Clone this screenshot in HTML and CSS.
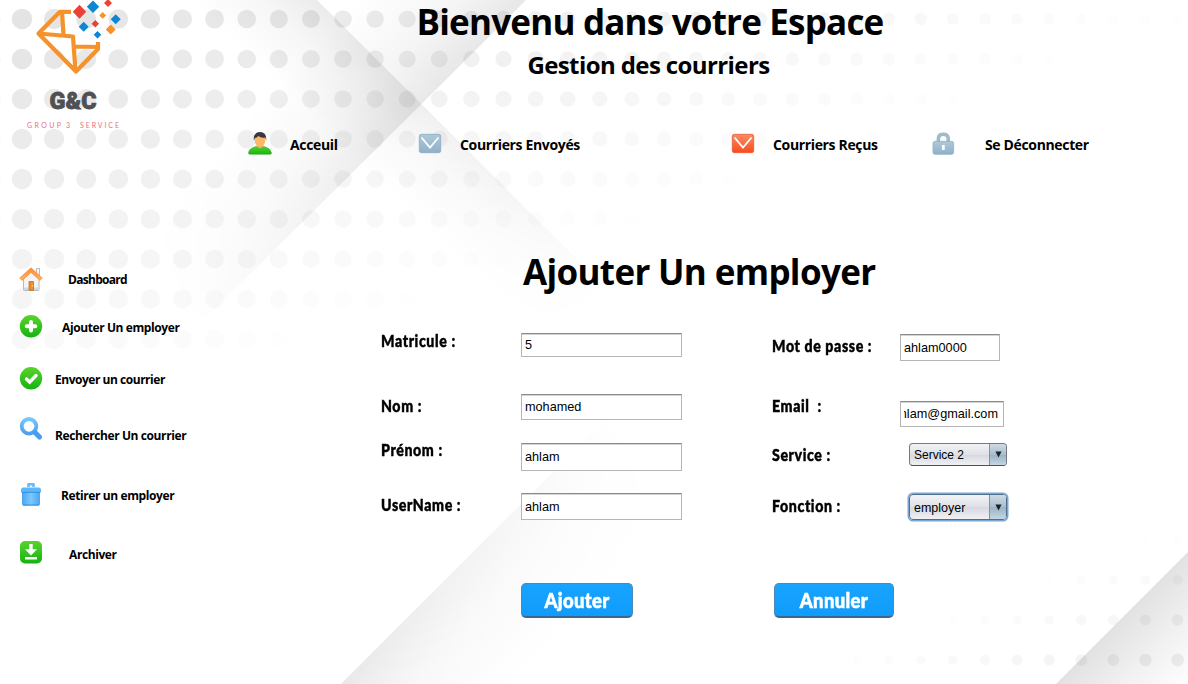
FILE: index.html
```html
<!DOCTYPE html>
<html lang="fr">
<head>
<meta charset="utf-8">
<title>Gestion des courriers</title>
<link rel="stylesheet" href="styles.css">
</head>
<body>
<svg class="backdrop" viewBox="0 0 1188 684" aria-hidden="true">
  <defs>
    <linearGradient id="s1" gradientUnits="userSpaceOnUse" x1="417" y1="100" x2="357" y2="162"><stop offset="0" stop-opacity=".075"/><stop offset=".4" stop-opacity=".035"/><stop offset="1" stop-opacity="0"/></linearGradient>
    <linearGradient id="s2" gradientUnits="userSpaceOnUse" x1="422" y1="102" x2="340" y2="22"><stop offset="0" stop-opacity=".09"/><stop offset=".4" stop-opacity=".04"/><stop offset="1" stop-opacity="0"/></linearGradient>
    <linearGradient id="s3" gradientUnits="userSpaceOnUse" x1="440" y1="585" x2="525" y2="670"><stop offset="0" stop-opacity=".09"/><stop offset=".4" stop-opacity=".035"/><stop offset="1" stop-opacity="0"/></linearGradient>
    <linearGradient id="s4" gradientUnits="userSpaceOnUse" x1="1122" y1="618" x2="1188" y2="684"><stop offset="0" stop-opacity=".115"/><stop offset=".5" stop-opacity=".055"/><stop offset="1" stop-opacity=".005"/></linearGradient>
    <linearGradient id="f1" gradientUnits="userSpaceOnUse" x1="410" y1="95" x2="610" y2="290"><stop offset="0" stop-color="#fff"/><stop offset=".12" stop-color="#bbb"/><stop offset=".5" stop-color="#888"/><stop offset="1" stop-color="#000"/></linearGradient>
    <linearGradient id="f2" gradientUnits="userSpaceOnUse" x1="450" y1="76" x2="200" y2="324"><stop offset="0" stop-color="#fff"/><stop offset=".3" stop-color="#ddd"/><stop offset="1" stop-color="#000"/></linearGradient>
    <linearGradient id="f3" gradientUnits="userSpaceOnUse" x1="342" y1="684" x2="610" y2="416"><stop offset="0" stop-color="#fff"/><stop offset="1" stop-color="#000"/></linearGradient>
    <mask id="m1"><path fill="url(#f1)" d="M0 0H1188V684H0z"/></mask>
    <mask id="m2"><path fill="url(#f2)" d="M0 0H1188V684H0z"/></mask>
    <mask id="m3"><path fill="url(#f3)" d="M0 0H1188V684H0z"/></mask>
  </defs>
  <path fill="url(#s1)" mask="url(#m1)" d="M317 0 625 307 560 400 100 200V0z"/>
  <path fill="url(#s2)" mask="url(#m2)" d="M526 0 200 324 100 250V0z"/>
  <path fill="url(#s3)" mask="url(#m3)" d="M341 684 625 400 900 684z"/>
  <path fill="url(#s4)" d="M1056 684 1188 552V684z"/>
  <g id="dots"></g>
</svg>

<div class="page">
  <aside class="side">
    <svg class="logo" viewBox="0 0 130 134" role="img" aria-label="G&amp;C">
      <g fill="none" stroke="#f5922b" stroke-width="4.2" stroke-linejoin="round">
        <path d="M71 11.800H60L38.500 33.500 76 71.500 98 49V42"/>
        <path d="M62 12 63.500 35M38.500 33.500 73 36.500 75.500 71M74 46.500 98 47"/>
      </g>
      <g fill="#ea4335"><path d="m79.500 4.700 6.700 7-6.700 7-6.700-7zM108-1l4 4-4 4-4-4zM95.300 20l3.700 3.700-3.700 3.700-3.700-3.700z"/></g>
      <g fill="#0d87d4"><path d="m93 .5 6.200 6.200-6.200 6.200-6.200-6.200zM115.700 14.300l5 5-5 5-5-5zM83.700 21.700l5 5-5 5-5-5zM97.500 31l3.800 3.800-3.800 3.800-3.800-3.800z"/></g>
      <g fill="#f5922b"><path d="m102.700 12 3.400 3.400-3.400 3.400-3.400-3.400zM110.700 24.500l5 5-5 5-5-5z"/></g>
      <text class="logo-name" x="49.500" y="108.700" textLength="47" lengthAdjust="spacingAndGlyphs">G&amp;C</text>
      <text class="logo-tag" x="27" y="127.800" textLength="34">GROUP</text>
      <text class="logo-tag" x="66" y="127.800">3</text>
      <text class="logo-tag" x="80" y="127.800" textLength="39">SERVICE</text>
    </svg>
    <nav class="menu">
      <a class="entry dash"><svg class="icon" viewBox="0 0 24 24"><path fill="#f5f5f7" stroke="#aaa" stroke-width=".8" d="M17.500 1.500h3V9h-3zM4.500 12 12 4.500l8 7.500v10.500q0 1-1 1H5.500q-1 0-1-1z"/><path fill="#d8d8dc" d="M5 20.500h14.500V23H5z"/><path fill="url(#gOr)" stroke="#f5862c" stroke-width=".6" d="M12 .8 23.300 11 21 13.500 12 5.500 3 13.500.7 11z"/><path fill="#f08a2a" stroke="#b86a20" stroke-width=".7" d="M10 14.500h4.500v8.800H10z"/><path fill="#ffe3a0" d="M12.800 18h1v1.500h-1z"/></svg><span>Dashboard</span></a>
      <a class="entry add"><svg class="icon" viewBox="0 0 24 24"><circle cx="12" cy="12.300" r="11.200" fill="url(#gGr)"/><path stroke="#fff" stroke-width="4" stroke-linecap="round" d="M12 8v8.600M7.700 12.300h8.600"/></svg><span>Ajouter Un employer</span></a>
      <a class="entry send"><svg class="icon" viewBox="0 0 24 24"><circle cx="12" cy="12.300" r="11.200" fill="url(#gGr)"/><path fill="none" stroke="#fff" stroke-width="3.400" stroke-linecap="round" d="m7.500 13 3.200 3L17 9.500"/></svg><span>Envoyer un courrier</span></a>
      <a class="entry find"><svg class="icon" viewBox="0 0 24 24"><g fill="none" stroke="url(#gBl)"><circle cx="10" cy="10.300" r="7.300" stroke-width="3.800"/><path stroke="#4a9cf2" stroke-width="5" stroke-linecap="round" d="m16.500 17 4 4"/></g></svg><span>Rechercher Un courrier</span></a>
      <a class="entry drop"><svg class="icon" viewBox="0 0 24 24"><path fill="url(#gBin)" d="M3 9h18v13q0 1.700-2 1.700H5q-2 0-2-1.700z"/><path fill="none" stroke="#64bdfb" stroke-width="2.600" stroke-linejoin="round" d="M9.500 5V2.300h5V5"/><path fill="#5db8fa" d="M4 5.500h16q2 .5 2 2V10H2V7.500q0-1.500 2-2z"/><path stroke="#278ce0" stroke-width=".9" d="M2.500 10.300h19M4 23h16"/></svg><span>Retirer un employer</span></a>
      <a class="entry arch"><svg class="icon" viewBox="0 0 24 24"><rect x="1" y="1" width="22" height="22.500" rx="5" fill="url(#gGr)"/><path fill="#fff" d="M10.300 4h3.400v5.200H18l-6 6.300-6-6.300h4.300zM6 17h12v2.600H6z"/></svg><span>Archiver</span></a>
    </nav>
  </aside>

  <main class="main">
    <header class="heading">
      <h1>Bienvenu dans votre Espace</h1>
      <h2>Gestion des courriers</h2>
    </header>
    <nav class="bar">
      <a class="link home"><svg class="icon" viewBox="0 0 24 24"><path fill="url(#gGr)" stroke="#2aa81a" stroke-width=".5" d="M.5 21q.5-4.500 6-6 2-.7 3-1h5q1 .3 3 1 5 1.500 6 6 0 1.300-1.500 1.300H2Q.5 22.300.5 21z"/><path fill="#f5a95c" d="M8.800 11.500h6.500v3q-3 3.500-6.500 0z"/><ellipse cx="12" cy="8" rx="5.300" ry="6.800" fill="#fdb768"/><path fill="#383a40" d="M5.800 8.500Q5.200.3 12 .1 18.800.3 18.200 8.500l-1.100-3q-4 1-6.600-1.500Q8.500 6 7 6z"/></svg><span>Acceuil</span></a>
      <a class="link sent"><svg class="icon" viewBox="0 0 24 24"><rect x="1.300" y="2.300" width="21.400" height="18.400" rx="2" fill="url(#gSt)" stroke="#8aa9c2" stroke-width=".8"/><path fill="none" stroke="#fff" stroke-width="1.800" d="M3.500 5.500 12 15.500l8.500-10"/></svg><span>Courriers Envoyés</span></a>
      <a class="link got"><svg class="icon" viewBox="0 0 24 24"><rect x="1.300" y="2.300" width="21.400" height="18.400" rx="2" fill="url(#gRd)" stroke="#e85a31" stroke-width=".8"/><path fill="none" stroke="#fff" stroke-width="1.800" d="M3.500 5.500 12 15.500l8.500-10"/></svg><span>Courriers Reçus</span></a>
      <a class="link quit"><svg class="icon" viewBox="0 0 24 24"><path fill="none" stroke="#9fbccb" stroke-width="3.600" d="M6.400 11V6q.5-3.800 4.900-3.800T16.200 6v5"/><rect x="1" y="9.300" width="20.600" height="13" rx="2" fill="url(#gSt)" stroke="#8aa9c2" stroke-width=".7"/><path fill="#fff" d="M9.900 13h2.800v5H9.900z"/></svg><span>Se Déconnecter</span></a>
    </nav>

    <h3>Ajouter Un employer</h3>
    <form class="form">
      <div class="col left">
        <div class="row r1"><label>Matricule :</label><div class="input">5</div></div>
        <div class="row r2"><label>Nom :</label><div class="input">mohamed</div></div>
        <div class="row r3"><label>Prénom :</label><div class="input">ahlam</div></div>
        <div class="row r4"><label>UserName :</label><div class="input">ahlam</div></div>
      </div>
      <div class="col right">
        <div class="row q1"><label>Mot de passe :</label><div class="input">ahlam0000</div></div>
        <div class="row q2"><label>Email &nbsp;:</label><div class="input mail"><div class="clip">ahlam@gmail.com</div></div></div>
        <div class="row q3"><label>Service :</label><div class="select"><span>Service 2</span><i><svg viewBox="0 0 8 8"><path d="M.5.500h7L4 7.500z"/></svg></i></div></div>
        <div class="row q4"><label>Fonction :</label><div class="select focus"><span>employer</span><i><svg viewBox="0 0 8 8"><path d="M.5.500h7L4 7.500z"/></svg></i></div></div>
      </div>
    </form>
    <div class="actions">
      <button class="ok" type="button"><span>Ajouter</span></button>
      <button class="no" type="button"><span>Annuler</span></button>
    </div>
  </main>
</div>

<svg class="defs" width="0" height="0" aria-hidden="true"><defs>
  <linearGradient id="gGr" x2="0" y2="1"><stop stop-color="#58d42c"/><stop offset="1" stop-color="#16b312"/></linearGradient>
  <linearGradient id="gOr" x2="0" y2="1"><stop stop-color="#ff8a35"/><stop offset="1" stop-color="#ffb35c"/></linearGradient>
  <linearGradient id="gBl" x2="0" y2="1"><stop stop-color="#74c6fb"/><stop offset="1" stop-color="#4ba0f3"/></linearGradient>
  <linearGradient id="gBin"><stop stop-color="#4aa5f0"/><stop offset=".5" stop-color="#7cc8ff"/><stop offset="1" stop-color="#4aa5f0"/></linearGradient>
  <linearGradient id="gSt" x2="0" y2="1"><stop stop-color="#adcad8"/><stop offset="1" stop-color="#8fb0cb"/></linearGradient>
  <linearGradient id="gRd" x2="0" y2="1"><stop stop-color="#fb8c63"/><stop offset="1" stop-color="#fa4b1d"/></linearGradient>
</defs></svg>
<script src="dots.js"></script>
</body>
</html>
```
FILE: styles.css
```css
* { box-sizing: border-box; }
body {
  margin: 0;
  width: 1188px;
  height: 684px;
  overflow: hidden;
  background: #fff;
  color: #000;
  font-family: "Open Sans", "Noto Sans", sans-serif;
  font-weight: 700;
}
.backdrop { position: absolute; inset: 0; width: 1188px; height: 684px; z-index: -1; }
.defs { position: absolute; }
.page { display: flex; height: 684px; }
.side { width: 240px; flex: none; }
.logo { display: block; width: 130px; height: 134px; }
.logo-name { font: 900 24px Roboto, sans-serif; fill: #505052; stroke: #505052; stroke-width: .8px; }
.logo-tag { font: 400 7px Lato, sans-serif; fill: #e8707c; }

.icon { display: block; flex: none; width: 24px; height: 24px; }
.menu { display: flex; flex-direction: column; padding: 133px 0 0 19px; }
.entry { display: flex; height: 24px; font-size: 12px; line-height: 20px; letter-spacing: -.4px; white-space: nowrap; }
.entry span { padding-top: 3px; }
.dash { gap: 25px; letter-spacing: -.7px; }
.add { gap: 19px; margin-top: 23px; }
.add span, .send span { padding-top: 4px; }
.send { gap: 12px; margin-top: 28px; letter-spacing: -.47px; }
.find { gap: 12px; margin-top: 26px; }
.find span { padding-top: 10px; }
.drop { gap: 18px; margin-top: 42px; }
.arch { gap: 26px; margin-top: 34px; }
.drop span { padding-top: 4px; }
.arch span { padding-top: 5px; }

.main { flex: 1; }
.heading { width: 820px; text-align: center; }
h1, h2, h3 { margin: 0; white-space: nowrap; font-weight: 700; }
h1 { font-size: 35px; line-height: 43px; letter-spacing: -.8px; }
h2 { font-size: 24px; line-height: 44px; letter-spacing: -.6px; margin-left: -3px; }
.bar { display: flex; height: 24px; margin: 45px 0 0 8px; font-size: 14px; line-height: 26px; letter-spacing: -.35px; white-space: nowrap; }
.link { display: flex; gap: 18px; }
.home { width: 170px; }
.sent { width: 313px; }
.got { width: 201px; }
.quit { gap: 29px; }
h3 { margin: 93px 0 0 283px; font-size: 35px; line-height: 46px; letter-spacing: -.66px; }

.form { display: flex; height: 228px; margin-top: 38px; padding-left: 141px; }
.left { width: 391px; }
.row { display: flex; align-items: center; }
label {
  width: 140px;
  padding-bottom: 2px;
  font: 900 16.500px/20px Lato, sans-serif;
  letter-spacing: .7px;
  white-space: nowrap;
  -webkit-text-stroke: .45px #000;
  transform: scaleX(.86);
  transform-origin: left;
}
.right label { width: 128px; }
.input {
  width: 161px;
  height: 100%;
  display: flex;
  align-items: center;
  padding: 0 3px;
  border: 1px solid #b5b5b5;
  border-top-color: #8b8b8b;
  box-shadow: inset 0 1px #d4d4d4;
  background: #fff;
  font: 400 12.700px "Liberation Sans", sans-serif;
}
.right .input { width: 100px; }
.right .mail { width: 104px; }
.clip { display: flex; justify-content: flex-end; width: 94px; overflow: hidden; }
.r1 { height: 24px; }
.r1 label { margin-bottom: 6px; }
.r2 { height: 26px; margin-top: 37px; }
.r3 { height: 28px; margin-top: 23px; }
.r3 label { margin-bottom: 12px; }
.r4 { height: 27px; margin-top: 22px; }
.r4 label { margin-bottom: 2px; }
.q1 { height: 27px; margin-top: 1px; }
.q1 label { margin-bottom: 2px; }
.q2 { height: 26px; margin-top: 40px; }
.q2 label { margin-bottom: 14px; }
.q3 { height: 23px; margin-top: 16px; }
.q3 label { padding-bottom: 0; }
.q4 { height: 26px; margin-top: 28px; }
.select {
  display: flex;
  width: 98px;
  height: 100%;
  margin-left: 9px;
  border: 1px solid #74797f;
  border-bottom-color: #4d5258;
  border-radius: 4px;
  overflow: hidden;
  background: linear-gradient(#f2f3f5, #dfe1e6 50%, #d5d8de 52%, #f0f1f5);
  font: 400 12px "Liberation Sans", sans-serif;
}
.select span { flex: 1; align-self: center; padding-left: 4px; }
.select i {
  display: flex;
  align-items: center;
  justify-content: center;
  width: 17px;
  border-left: 1px solid #7e93a5;
  background: linear-gradient(#cddbe5, #a9bfcf 50%, #9ab3c5 52%, #c3d6e2);
}
.select i svg { width: 7px; height: 7px; fill: #1c2329; }
.focus { border-color: #4d6f92; box-shadow: 0 0 0 1.500px #7ba6cf; font-size: 12.500px; }
.focus span { padding-top: 2px; }

.actions { display: flex; gap: 141px; margin-top: 22px; padding-left: 281px; }
button {
  height: 35px;
  padding: 0;
  border: 1px solid #4f87b5;
  border-bottom: 2px solid #3a6792;
  border-radius: 5px;
  background: linear-gradient(#18a3ff, #109cfb);
  color: #fff;
  font: 900 21.500px/32px Lato, sans-serif;
  letter-spacing: .4px;
  -webkit-text-stroke: .6px #fff;
}
button span { display: block; transform: scaleX(.86); }
.ok { width: 112px; }
.no { width: 120px; }
```
FILE: dots.js
```javascript
// Dotted texture: rows fade out along a diagonal from two opposite corners.
const layer = document.getElementById('dots');
const add = (x, y, r, alpha) => {
  if (alpha < 0.003) return;
  const dot = document.createElementNS('http://www.w3.org/2000/svg', 'circle');
  dot.setAttribute('cx', x);
  dot.setAttribute('cy', y);
  dot.setAttribute('r', r);
  dot.setAttribute('fill-opacity', alpha);
  layer.appendChild(dot);
};
for (let col = -1; col < 38; col++) {
  const x = 22 + col * 32.1;
  for (let row = 0; row < 9; row++) {
    const y = 19 + row * 40;
    add(x, y, 10.4 - x * 0.0045, 0.113 * (1 - (x + 2.75 * y) / 1270));
  }
  for (let row = 0; row < 4; row++) {
    const y = 540 + row * 40;
    const t = 1 - ((1178 - x) + 2.6 * (660 - y)) / 370;
    add(x, y, 4 + 2.5 * t, 0.06 * t);
  }
}
```
